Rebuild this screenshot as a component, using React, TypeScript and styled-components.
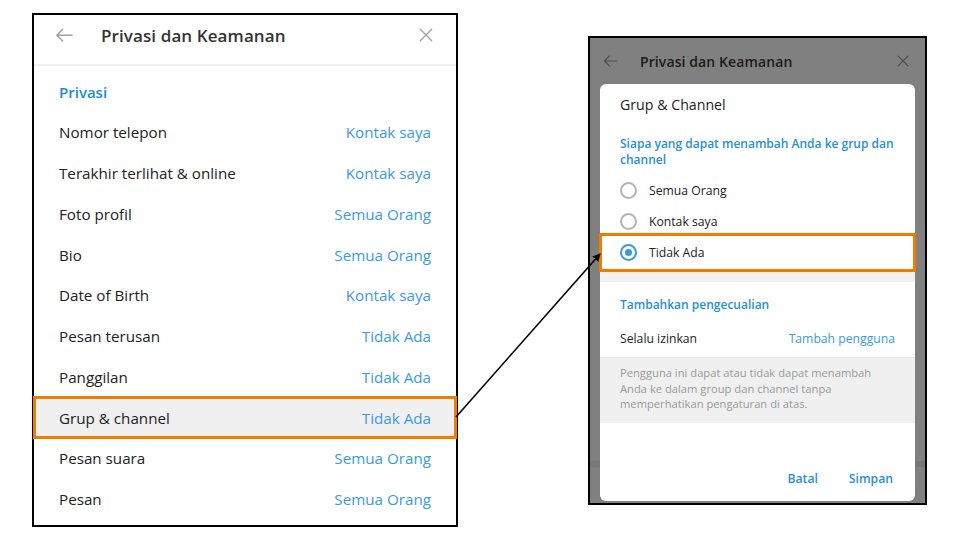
import React from "react";
import styled, { createGlobalStyle } from "styled-components";

const GlobalStyle = createGlobalStyle`
  html, body { margin: 0; padding: 0; background: #ffffff; }
  body { font-family: "Open Sans", "Noto Sans", sans-serif; }
  * { box-sizing: border-box; }
`;

const Stage = styled.div`
  position: relative;
  width: 960px;
  height: 540px;
  display: flex;
  align-items: flex-start;
  padding: 13px 0 0 32px;
  overflow: hidden;
`;

/* ---------- Left panel ---------- */
const LeftPanel = styled.div`
  width: 426px;
  height: 514px;
  border: 2px solid #000;
  background: #fff;
  display: flex;
  flex-direction: column;
`;

const Header = styled.div<{ $compact?: boolean }>`
  display: flex;
  align-items: center;
  height: ${(p) => (p.$compact ? "46px" : "49px")};
  padding: ${(p) => (p.$compact ? "0 16px 0 13px" : "0 23px 9px 21px")};
  flex-shrink: 0;
`;

const IconBtn = styled.span`
  display: flex;
  align-items: center;
  justify-content: center;
  flex-shrink: 0;
`;

const HeaderTitle = styled.div<{ $compact?: boolean; $dim?: boolean }>`
  flex: 1;
  margin-left: ${(p) => (p.$compact ? "22px" : "28px")};
  font-size: ${(p) => (p.$compact ? "14px" : "17px")};
  font-weight: 600;
  color: ${(p) => (p.$dim ? "#1a1a1a" : "#333333")};
  letter-spacing: 0.1px;
`;

const Divider = styled.div`
  height: 2px;
  background: #f0f0f0;
  flex-shrink: 0;
`;

const List = styled.div`
  padding-top: 6px;
  display: flex;
  flex-direction: column;
`;

const SectionTitle = styled.div`
  height: 40px;
  display: flex;
  align-items: center;
  padding: 0 25px;
  font-size: 15px;
  font-weight: 600;
  color: #1e8bd2;
`;

const Row = styled.div<{ $active?: boolean }>`
  position: relative;
  height: 40.75px;
  display: flex;
  align-items: center;
  justify-content: space-between;
  padding: 0 25px;
  font-size: 15.2px;
  background: ${(p) => (p.$active ? "#f0f0f0" : "transparent")};
  outline: ${(p) => (p.$active ? "3px solid #f07c00" : "none")};
  outline-offset: -2px;
`;

const RowLabel = styled.span`
  color: #222222;
`;

const RowValue = styled.span`
  color: #3a9be0;
`;

/* ---------- Right panel ---------- */
const RightPanel = styled.div`
  position: relative;
  margin: 23px 0 0 130px;
  width: 339px;
  height: 469px;
  border: 2px solid #000;
  background: #808080;
  display: flex;
  flex-direction: column;
`;

const ShadeBand = styled.div`
  margin-top: 377px;
  height: 6px;
  background: #777777;
`;

const Dialog = styled.div`
  position: absolute;
  left: 10px;
  top: 46px;
  width: 315px;
  height: 417px;
  background: #ffffff;
  border-radius: 6px;
  display: flex;
  flex-direction: column;
`;

const DialogTitle = styled.div`
  padding: 0 20px 2px;
  height: 42px;
  font-size: 14.2px;
  color: #222;
  display: flex;
  align-items: center;
`;

const BlueHeading = styled.div`
  margin-top: 10px;
  padding: 0 20px;
  font-size: 12px;
  font-weight: 600;
  line-height: 16px;
  color: #2a8fd8;
`;

const RadioList = styled.div`
  padding-top: 7px;
  display: flex;
  flex-direction: column;
`;

const RadioRow = styled.div<{ $active?: boolean }>`
  display: flex;
  align-items: center;
  gap: 12px;
  font-size: 12.2px;
  color: #222;
  background: #fff;
  height: ${(p) => (p.$active ? "39px" : "31px")};
  margin: ${(p) => (p.$active ? "-4px -1px 0" : "0")};
  padding-left: ${(p) => (p.$active ? "18px" : "20px")};
  border: ${(p) => (p.$active ? "3px solid #f07c00" : "none")};
`;

const RadioCircle = styled.span<{ $checked?: boolean }>`
  width: 17px;
  height: 17px;
  border-radius: 50%;
  border: 2px solid ${(p) => (p.$checked ? "#3a9be0" : "#b5b5b5")};
  display: flex;
  align-items: center;
  justify-content: center;
  flex-shrink: 0;
  &::after {
    content: "";
    width: 7px;
    height: 7px;
    border-radius: 50%;
    background: ${(p) => (p.$checked ? "#3a9be0" : "transparent")};
  }
`;

const GrayGap = styled.div`
  height: 10px;
  background: #f1f1f1;
`;

const SubHeading = styled.div`
  height: 34px;
  padding: 10px 20px 0;
  display: flex;
  align-items: center;
  font-size: 12px;
  font-weight: 600;
  color: #2a8fd8;
`;

const SettingRow = styled.div`
  height: 41px;
  padding: 3px 20px 0;
  display: flex;
  align-items: center;
  justify-content: space-between;
  font-size: 12.2px;
`;

const InfoBox = styled.div`
  background: #f0f0f0;
  border-top: 1px solid #e4e4e4;
  padding: 7px 20px 11px;
  font-size: 11.2px;
  line-height: 15.5px;
  color: #9a9a9a;
`;

const Actions = styled.div`
  margin-top: auto;
  height: 46px;
  padding-right: 22px;
  display: flex;
  align-items: center;
  justify-content: flex-end;
  gap: 31px;
`;

const ActionButton = styled.span`
  font-size: 12.2px;
  font-weight: 600;
  color: #2a8fd8;
`;

const ArrowOverlay = styled.svg`
  position: absolute;
  left: 0;
  top: 0;
  pointer-events: none;
`;

const BackIcon = ({ size, color }: { size: number; color: string }) => (
  <svg width={size} height={size * 0.8} viewBox="0 0 20 16" fill="none">
    <path d="M19 8H2M8.5 1.5L2 8l6.5 6.5" stroke={color} strokeWidth="1.6" strokeLinecap="round" strokeLinejoin="round" />
  </svg>
);

const CloseIcon = ({ size, color }: { size: number; color: string }) => (
  <svg width={size} height={size} viewBox="0 0 16 16" fill="none">
    <path d="M1.5 1.5l13 13M14.5 1.5l-13 13" stroke={color} strokeWidth="1.5" strokeLinecap="round" />
  </svg>
);

const rows: { label: string; value: string; active?: boolean }[] = [
  { label: "Nomor telepon", value: "Kontak saya" },
  { label: "Terakhir terlihat & online", value: "Kontak saya" },
  { label: "Foto profil", value: "Semua Orang" },
  { label: "Bio", value: "Semua Orang" },
  { label: "Date of Birth", value: "Kontak saya" },
  { label: "Pesan terusan", value: "Tidak Ada" },
  { label: "Panggilan", value: "Tidak Ada" },
  { label: "Grup & channel", value: "Tidak Ada", active: true },
  { label: "Pesan suara", value: "Semua Orang" },
  { label: "Pesan", value: "Semua Orang" },
];

const radios = [
  { label: "Semua Orang", checked: false },
  { label: "Kontak saya", checked: false },
  { label: "Tidak Ada", checked: true },
];

export default function App() {
  return (
    <>
      <GlobalStyle />
      <Stage>
        <LeftPanel>
          <Header>
            <IconBtn>
              <BackIcon size={18} color="#a0a0a0" />
            </IconBtn>
            <HeaderTitle>Privasi dan Keamanan</HeaderTitle>
            <IconBtn>
              <CloseIcon size={14} color="#a0a0a0" />
            </IconBtn>
          </Header>
          <Divider />
          <List>
            <SectionTitle>Privasi</SectionTitle>
            {rows.map((r) => (
              <Row key={r.label} $active={r.active}>
                <RowLabel>{r.label}</RowLabel>
                <RowValue>{r.value}</RowValue>
              </Row>
            ))}
          </List>
        </LeftPanel>

        <RightPanel>
          <Header $compact>
            <IconBtn>
              <BackIcon size={15} color="#4d4d4d" />
            </IconBtn>
            <HeaderTitle $compact $dim>
              Privasi dan Keamanan
            </HeaderTitle>
            <IconBtn>
              <CloseIcon size={12} color="#4d4d4d" />
            </IconBtn>
          </Header>
          <ShadeBand />

          <Dialog>
            <DialogTitle>Grup &amp; Channel</DialogTitle>
            <BlueHeading>Siapa yang dapat menambah Anda ke grup dan channel</BlueHeading>
            <RadioList>
              {radios.map((r) => (
                <RadioRow key={r.label} $active={r.checked}>
                  <RadioCircle $checked={r.checked} />
                  {r.label}
                </RadioRow>
              ))}
            </RadioList>
            <GrayGap />
            <SubHeading>Tambahkan pengecualian</SubHeading>
            <SettingRow>
              <RowLabel>Selalu izinkan</RowLabel>
              <RowValue>Tambah pengguna</RowValue>
            </SettingRow>
            <InfoBox>
              Pengguna ini dapat atau tidak dapat menambah Anda ke dalam group dan channel tanpa
              memperhatikan pengaturan di atas.
            </InfoBox>
            <Actions>
              <ActionButton>Batal</ActionButton>
              <ActionButton>Simpan</ActionButton>
            </Actions>
          </Dialog>
        </RightPanel>

        <ArrowOverlay width="960" height="540" viewBox="0 0 960 540">
          <defs>
            <marker id="ah" markerWidth="8" markerHeight="8" refX="7" refY="4" orient="auto" markerUnits="userSpaceOnUse">
              <path d="M0 0L8 4L0 8z" fill="#000" />
            </marker>
          </defs>
          <line x1="456" y1="417" x2="600" y2="254" stroke="#000" strokeWidth="1.6" markerEnd="url(#ah)" />
        </ArrowOverlay>
      </Stage>
    </>
  );
}
